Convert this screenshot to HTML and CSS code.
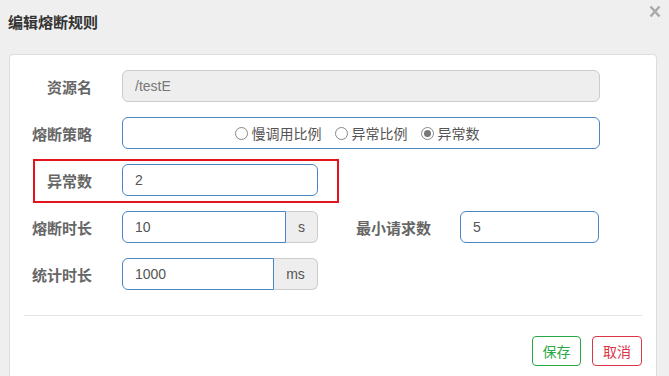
FILE: index.html
```html
<!DOCTYPE html>
<html lang="zh-CN">
<head>
    <meta charset="UTF-8">
    <title>编辑熔断规则</title>
    <link rel="stylesheet" href="styles.css">
</head>
<body>
    <div class="modal-header">
        <h4 class="modal-title">编辑熔断规则</h4>
        <button class="close" type="button">
            <svg width="12" height="13" viewBox="0 0 12 13"><path d="M1.5 1.5 L10.5 11.5 M10.5 1.5 L1.5 11.5" stroke="#aaa" stroke-width="2.6" fill="none"/></svg>
        </button>
    </div>

    <div class="modal-body">
        <form class="rule-form">
            <div class="form-row">
                <label class="row-label">资源名</label>
                <input class="form-input input-wide" type="text" value="/testE" disabled>
            </div>

            <div class="form-row">
                <label class="row-label">熔断策略</label>
                <div class="form-input input-wide radio-box">
                    <label class="radio"><input type="radio" name="grade"> 慢调用比例</label>
                    <label class="radio"><input type="radio" name="grade"> 异常比例</label>
                    <label class="radio"><input type="radio" name="grade" checked> 异常数</label>
                </div>
            </div>

            <div class="form-row marked">
                <label class="row-label">异常数</label>
                <input class="form-input input-mid" type="text" value="2">
                <span class="mark-box"></span>
            </div>

            <div class="form-row">
                <label class="row-label">熔断时长</label>
                <div class="input-group">
                    <input class="form-input group-input" type="text" value="10">
                    <span class="addon addon-s">s</span>
                </div>
                <label class="side-label">最小请求数</label>
                <input class="form-input input-small" type="text" value="5">
            </div>

            <div class="form-row">
                <label class="row-label">统计时长</label>
                <div class="input-group">
                    <input class="form-input group-input" type="text" value="1000">
                    <span class="addon addon-ms">ms</span>
                </div>
            </div>
        </form>

        <hr class="divider">

        <div class="modal-footer">
            <button class="btn btn-save" type="button">保存</button>
            <button class="btn btn-cancel" type="button">取消</button>
        </div>
    </div>
</body>
</html>
```

FILE: styles.css
```css
body, html {
    margin: 0;
    padding: 0;
    background-color: #efefef;
    font-family: "Liberation Sans", "Noto Sans CJK SC", sans-serif;
    color: #333;
}

body {
    padding: 0 12px 0 9px;
    height: 376px;
    box-sizing: border-box;
    overflow: hidden;
}

.modal-header {
    height: 54px;
    box-sizing: border-box;
    display: flex;
    justify-content: space-between;
    align-items: flex-start;
}

.modal-title {
    margin: 0;
    padding-top: 12px;
    margin-left: -1px;
    font-size: 15px;
    line-height: 21px;
    font-weight: bold;
    color: #333;
}

.close {
    background: transparent;
    border: none;
    padding: 0;
    margin-top: 5px;
    margin-right: -4px;
    line-height: 0;
    cursor: pointer;
}

.modal-body {
    background-color: white;
    border: 1px solid #ddd;
    border-radius: 4px;
    padding: 15px 14px 20px;
    min-height: 330px;
}

.rule-form {
    display: flex;
    flex-direction: column;
    gap: 15px;
}

.form-row {
    display: flex;
    align-items: center;
    height: 32px;
    position: relative;
}

.row-label {
    width: 68px;
    margin-right: 30px;
    text-align: right;
    font-size: 15px;
    font-weight: bold;
    color: #666;
    white-space: nowrap;
}

.form-input {
    height: 32px;
    box-sizing: border-box;
    border: 1px solid #4a86c2;
    border-radius: 6px;
    padding: 0 12px;
    font-family: inherit;
    font-size: 14px;
    color: #555;
    background-color: white;
    outline: none;
}

.form-input:disabled {
    background-color: #eee;
    border-color: #ccc;
    color: #777;
}

.input-wide {
    width: 478px;
}

.input-mid {
    width: 196px;
}

.input-small {
    width: 139px;
}

.radio-box {
    display: flex;
    justify-content: center;
    align-items: center;
    gap: 13px;
    padding-left: 4px;
}

.radio {
    display: flex;
    align-items: center;
    gap: 4px;
    font-size: 14px;
    color: #555;
}

.radio input {
    appearance: none;
    width: 13px;
    height: 13px;
    margin: 0;
    border: 1px solid #888;
    border-radius: 50%;
    background: white;
    position: relative;
}

.radio input:checked::after {
    content: "";
    position: absolute;
    left: 2px;
    top: 2px;
    width: 7px;
    height: 7px;
    border-radius: 50%;
    background-color: #777;
}

/* red annotation frame from the screenshot */
.mark-box {
    position: absolute;
    left: 9px;
    top: -5px;
    width: 306px;
    height: 44px;
    box-sizing: border-box;
    border: 2px solid #e3141c;
    pointer-events: none;
}

.input-group {
    display: flex;
    width: 196px;
}

.group-input {
    flex: 1;
    min-width: 0;
    border-radius: 6px 0 0 6px;
}

.addon {
    height: 32px;
    box-sizing: border-box;
    display: flex;
    align-items: center;
    justify-content: center;
    background-color: #eee;
    border: 1px solid #ccc;
    border-left: none;
    border-radius: 0 6px 6px 0;
    font-size: 14px;
    color: #555;
}

.addon-s {
    width: 32px;
}

.addon-ms {
    width: 44px;
}

.side-label {
    margin-left: 38px;
    margin-right: 29px;
    font-size: 15px;
    font-weight: bold;
    color: #666;
}

.divider {
    border: none;
    border-top: 1px solid #e5e5e5;
    margin: 25px 0 20px;
}

.modal-footer {
    display: flex;
    justify-content: flex-end;
    gap: 11px;
}

.btn {
    height: 30px;
    width: 50px;
    padding: 0;
    background-color: white;
    border-radius: 4px;
    font-family: inherit;
    font-size: 14px;
    cursor: pointer;
}

.btn-save {
    width: 49px;
    border: 1px solid #28a745;
    color: #28a745;
}

.btn-cancel {
    border: 1px solid #dc3545;
    color: #dc3545;
}
```
